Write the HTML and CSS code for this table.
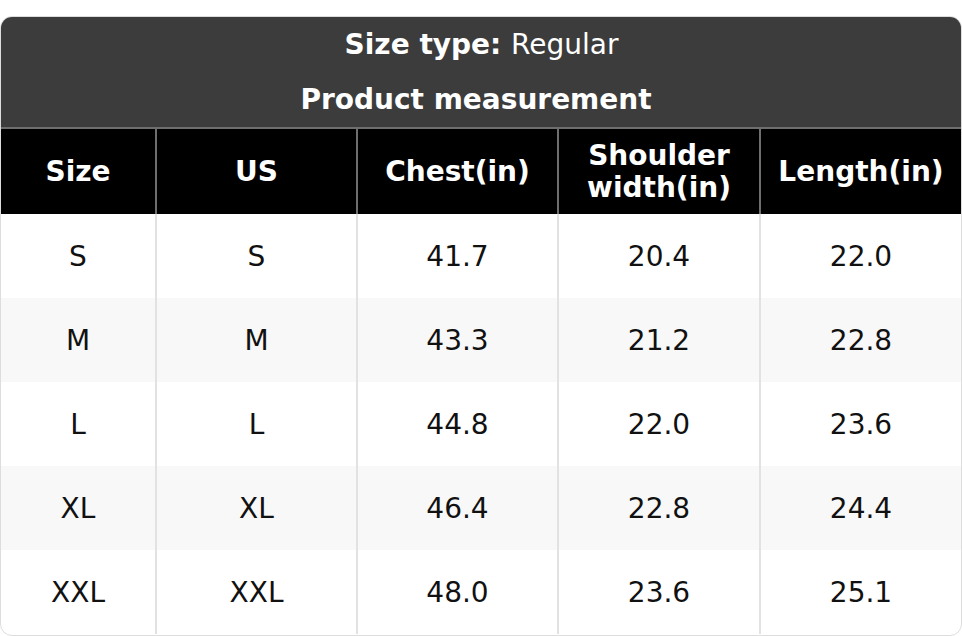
FILE: index.html
```html
<!DOCTYPE html>
<html>
<head>
<meta charset="utf-8">
<link rel="stylesheet" href="styles.css">
</head>
<body>
<div class="card">
  <table class="chart">
    <colgroup>
      <col class="c1"><col class="c2"><col class="c3"><col class="c4"><col class="c5">
    </colgroup>
    <thead>
      <tr class="title first"><th colspan="5"><b>Size type:</b> <span class="reg">Regular</span></th></tr>
      <tr class="title second"><th colspan="5">Product measurement</th></tr>
      <tr class="head">
        <th>Size</th><th>US</th><th>Chest(in)</th><th>Shoulder<br>width(in)</th><th>Length(in)</th>
      </tr>
    </thead>
    <tbody>
      <tr><td>S</td><td>S</td><td>41.7</td><td>20.4</td><td>22.0</td></tr>
      <tr class="alt"><td>M</td><td>M</td><td>43.3</td><td>21.2</td><td>22.8</td></tr>
      <tr><td>L</td><td>L</td><td>44.8</td><td>22.0</td><td>23.6</td></tr>
      <tr class="alt"><td>XL</td><td>XL</td><td>46.4</td><td>22.8</td><td>24.4</td></tr>
      <tr><td>XXL</td><td>XXL</td><td>48.0</td><td>23.6</td><td>25.1</td></tr>
    </tbody>
  </table>
</div>
</body>
</html>
```
FILE: styles.css
```css
html, body {
  margin: 0;
  padding: 0;
  background: #ffffff;
}
body {
  padding-top: 16px;
  font-family: "DejaVu Sans", Verdana, sans-serif;
  font-size: 28px;
  color: #111111;
}
.card {
  width: 962px;
  height: 620px;
  box-sizing: border-box;
  border: 1px solid #dddddd;
  border-radius: 12px;
  overflow: hidden;
  background: #ffffff;
}
.chart {
  width: 961px;
  border-collapse: collapse;
  table-layout: fixed;
}
.c1 { width: 155px; }
.c2 { width: 201px; }
.c3 { width: 201px; }
.c4 { width: 202px; }
.c5 { width: 202px; }
.title th {
  background: #3c3c3c;
  color: #ffffff;
  padding: 0;
  font-weight: bold;
  text-align: center;
}
.title.first th { height: 54px; }
.title.second th { height: 56px; padding-right: 11px; }
.title .reg { font-weight: normal; }
.head th {
  background: #000000;
  color: #ffffff;
  font-weight: bold;
  height: 85px;
  padding: 0;
  border-top: 2px solid #6e6e6e;
  border-left: 2px solid #6e6e6e;
  border-right: 2px solid #6e6e6e;
  line-height: 32px;
}
.head th:first-child { border-left: none; }
td {
  height: 84px;
  padding: 0;
  text-align: center;
  border-left: 2px solid #e2e2e2;
  border-right: 2px solid #e2e2e2;
}
td:first-child { border-left: none; }
tr.alt td { background: #f8f8f8; }
```
